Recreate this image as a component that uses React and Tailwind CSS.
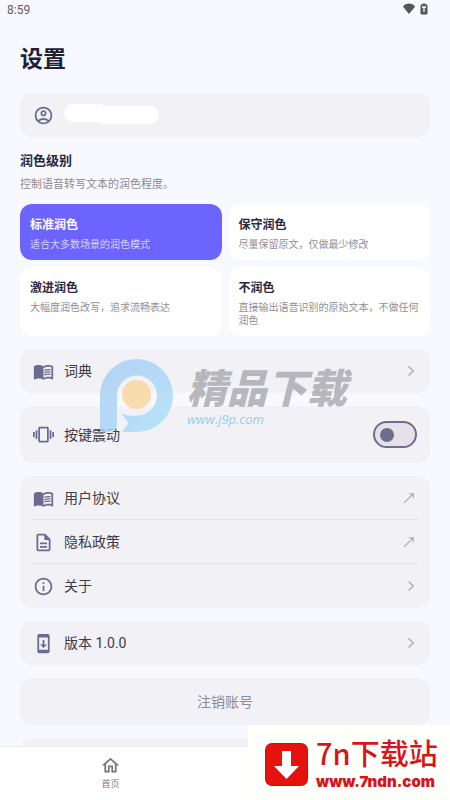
import React, { useState } from 'react'
import {
  MdOutlineAccountCircle,
  MdMenuBook,
  MdVibration,
  MdOutlineDescription,
  MdInfoOutline,
  MdSystemUpdate,
  MdOutlineHome,
} from 'react-icons/md'

const levels = [
  { id: 'standard', title: '标准润色', desc: '适合大多数场景的润色模式' },
  { id: 'light', title: '保守润色', desc: '尽量保留原文，仅做最少修改' },
  { id: 'heavy', title: '激进润色', desc: '大幅度润色改写，追求流畅表达' },
  { id: 'none', title: '不润色', desc: '直接输出语音识别的原始文本，不做任何润色' },
]

function ExternalArrow() {
  return (
    <svg viewBox="0 0 12 12" className="mr-[3px] h-3 w-3" fill="none" stroke="currentColor" strokeWidth="1.1" aria-hidden="true">
      <path d="M1 11 L9.5 2.5" />
      <path d="M5.800 1.700 H10.300 V6.200" />
      <path d="M7.500 1.700 L10.300 4.500 V1.700 Z" fill="currentColor" stroke="none" />
    </svg>
  )
}

function Chevron() {
  return (
    <svg viewBox="0 0 8 12" className="mr-[3px] h-3 w-2" fill="none" stroke="currentColor" strokeWidth="1.4" aria-hidden="true">
      <path d="M1.500 1.500 L6.300 6 L1.500 10.500" />
    </svg>
  )
}

function StatusBar() {
  return (
    <div className="flex h-5 shrink-0 items-center justify-between pl-[7px] pr-[22px] font-['Roboto',sans-serif] text-xs text-[#5c5d64]">
      <span>8:59</span>
      <div className="flex items-center gap-[5px] pb-[3px] text-[#55565c]">
        <svg viewBox="0 0 12 11" className="h-[11px] w-3" fill="currentColor" aria-hidden="true">
          <path d="M6 11 L0 3.800 C1.200 1.400 3.500 0.500 6 0.500 C8.500 0.500 10.800 1.400 12 3.800 Z" />
        </svg>
        <svg viewBox="0 0 8 12" className="h-3 w-2" aria-hidden="true">
          <path d="M2.5 0.5 H5.5 V1.5 H6.5 Q7.5 1.5 7.5 2.5 V10.5 Q7.5 11.5 6.5 11.5 H1.5 Q0.5 11.5 0.5 10.5 V2.5 Q0.5 1.5 1.5 1.5 H2.5 Z" fill="#55565c" />
          <path d="M2 3.2 H6 V5 H4.7 V9 H3.3 V5 H2 Z" fill="#f0f0f6" />
        </svg>
      </div>
    </div>
  )
}

function Row({ icon: Icon, label, external }) {
  return (
    <a href="#" className="flex h-11 items-center gap-[10px] pl-[13px] pr-3">
      <Icon className="h-[21px] w-[21px] text-[#6c6b8f]" />
      <span className="flex-1 text-sm text-[#3b3a46]">{label}</span>
      <span className="text-[#aeaeb6]">{external ? <ExternalArrow /> : <Chevron />}</span>
    </a>
  )
}

function SiteMark() {
  return (
    <div className="pointer-events-none absolute left-[100px] top-[359px] flex opacity-80">
      <svg viewBox="0 0 74 74" className="h-[74px] w-[74px]" aria-hidden="true">
        <defs>
          <linearGradient id="pMark" x1="0" y1="0" x2="1" y2="1">
            <stop offset="0" stopColor="#a2cdf2" />
            <stop offset="0.5" stopColor="#a6d4f6" />
            <stop offset="1" stopColor="#a5e4f5" />
          </linearGradient>
        </defs>
        <path
          d="M0 73 V36.500 A36.500 36.500 0 1 1 36.500 73 H22 L28.500 64 L21.500 54.500 Q27 57.500 37 56.500 A20 20 0 1 0 17 37 V66 Q16 72 10 73 Z"
          fill="url(#pMark)"
        />
        <circle cx="36.500" cy="35.500" r="14.500" fill="#fad69b" />
      </svg>
      <div className="ml-[13px] flex flex-col pt-2">
        <span className="whitespace-nowrap text-[40px] font-black italic leading-[46px] text-[#a8a8ae]">精品下载</span>
        <span className="font-['Open_Sans',sans-serif] text-[13px] font-medium italic leading-3 text-[#80c6ea]">www.j9p.com</span>
      </div>
    </div>
  )
}

function DownloadBanner() {
  return (
    <div className="absolute bottom-0 right-0 flex h-[75px] w-[202px] items-center gap-2 bg-[#fffffb] pl-[17px] text-[#d7141a]">
      <svg viewBox="0 0 43 43" className="mt-1 h-[43px] w-[43px] shrink-0" aria-hidden="true">
        <rect width="43" height="43" rx="7" fill="#c90f0c" />
        <rect x="1" y="1" width="41" height="41" rx="6" fill="#e6120d" />
        <path d="M17 8 H26 V23 H34 L21.500 36 L9 23 H17 Z" fill="#ffffff" />
      </svg>
      <div className="flex flex-col whitespace-nowrap pb-1">
        <span className="font-['Noto_Sans_CJK_SC',sans-serif] text-[29px] font-medium leading-[42px]">7n下载站</span>
        <span className="font-['Inter',sans-serif] text-[15px] font-black leading-[18px]">www.7ndn.com</span>
      </div>
    </div>
  )
}

export default function App() {
  const [level, setLevel] = useState('standard')
  const [vibrate, setVibrate] = useState(false)

  return (
    <div
      lang="zh-CN"
      className="relative flex h-screen flex-col overflow-hidden bg-[#f8f9fe] font-['Roboto','Noto_Sans_CJK_SC',sans-serif]"
    >
      <StatusBar />

      <main className="flex-1 overflow-y-auto px-5 [scrollbar-width:none]">
        <h1 className="pt-[22px] text-[23px] font-bold leading-9 text-[#211f38]">设置</h1>

        {/* Account */}
        <section className="mt-[15px] flex h-11 items-center gap-[10px] rounded-xl bg-[#f2f1f6] pl-[13px] pr-3">
          <MdOutlineAccountCircle className="h-[21px] w-[21px] text-[#6c6b8f]" />
          <svg viewBox="0 0 96 22" className="h-[22px] w-24" fill="#ffffff" aria-hidden="true">
            <path d="M9 0 Q18 -2 36 0 Q40 2 44 2 H86 Q95 3 95 11 Q94 20 85 20 H38 Q34 18 28 18 H9 Q0 17 0 9 Q1 1 9 0 Z" />
          </svg>
        </section>

        {/* Polish level */}
        <h2 className="mt-[13px] text-[13px] font-bold leading-[22px] text-[#2b293f]">润色级别</h2>
        <p className="mt-[3px] text-[11px] leading-5 text-[#8a8a90]">控制语音转写文本的润色程度。</p>
        <div className="mt-[9px] grid grid-cols-2 gap-[7px]">
          {levels.map((item) => {
            const active = item.id === level
            return (
              <button
                key={item.id}
                type="button"
                onClick={() => setLevel(item.id)}
                className={`flex flex-col rounded-xl px-[10px] pb-[9px] pt-3 text-left ${
                  active ? 'bg-[#6d63ff]' : 'bg-white'
                }`}
              >
                <span className={`text-xs font-bold leading-[18px] ${active ? 'text-white' : 'text-[#2b293f]'}`}>
                  {item.title}
                </span>
                <span className={`mt-1 text-[10px] leading-[13px] ${active ? 'text-[#d6d3ff]' : 'text-[#8f8f94]'}`}>
                  {item.desc}
                </span>
              </button>
            )
          })}
        </div>

        <section className="mt-[13px] rounded-xl bg-[#f2f1f6]">
          <Row icon={MdMenuBook} label="词典" />
        </section>

        <section className="mt-[13px] rounded-xl bg-[#f2f1f6]">
          <label className="relative flex h-[57px] items-center gap-[10px] pl-[13px] pr-3">
            <MdVibration className="h-[21px] w-[21px] text-[#6c6b8f]" />
            <span className="flex-1 text-sm text-[#3b3a46]">按键震动</span>
            <input
              type="checkbox"
              role="switch"
              checked={vibrate}
              onChange={(e) => setVibrate(e.target.checked)}
              className="peer sr-only"
            />
            <span className="mr-px flex h-[27px] w-11 items-center rounded-full border-2 border-[#6f6d8c] bg-[#e6e1e8] px-[5px] peer-checked:justify-end peer-checked:bg-[#6d63ff]">
              <span className="h-[14px] w-[14px] rounded-full bg-[#6f6d8c]" />
            </span>
          </label>
        </section>

        <section className="mt-[13px] rounded-xl bg-[#f2f1f6]">
          <Row icon={MdMenuBook} label="用户协议" external />
          <hr className="mx-3 -mt-px border-[#e5e4ea]" />
          <Row icon={MdOutlineDescription} label="隐私政策" external />
          <hr className="mx-3 -mt-px border-[#e5e4ea]" />
          <Row icon={MdInfoOutline} label="关于" />
        </section>

        <section className="mt-[13px] rounded-xl bg-[#f2f1f6]">
          <Row icon={MdSystemUpdate} label="版本 1.0.0" />
        </section>

        <button type="button" className="mt-[13px] h-[47px] w-full rounded-xl bg-[#f2f1f6] text-sm text-[#8b8b95]">
          注销账号
        </button>
        <div className="mt-[13px] h-[47px] rounded-xl bg-[#f2f1f6]" />
      </main>

      <nav className="grid h-[54px] shrink-0 grid-cols-2 border-t border-[#ececf0] bg-white">
        <a href="#" className="flex flex-col items-center pr-1 pt-2 text-[#77777b]">
          <MdOutlineHome className="h-[21px] w-[21px]" />
          <span className="mt-0.5 text-[9px] leading-3">首页</span>
        </a>
      </nav>

      <SiteMark />
      <DownloadBanner />
    </div>
  )
}
